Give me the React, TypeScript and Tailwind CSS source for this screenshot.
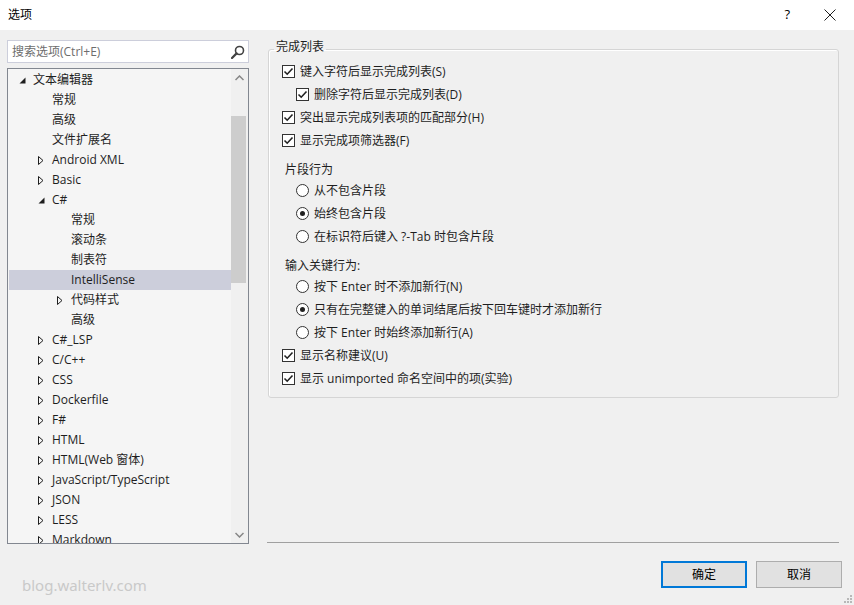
import React from "react";

type TreeNode = {
  label: string;
  level: 0 | 1 | 2;
  arrow?: "open" | "closed";
  selected?: boolean;
};

const treeNodes: TreeNode[] = [
  { label: "文本编辑器", level: 0, arrow: "open" },
  { label: "常规", level: 1 },
  { label: "高级", level: 1 },
  { label: "文件扩展名", level: 1 },
  { label: "Android XML", level: 1, arrow: "closed" },
  { label: "Basic", level: 1, arrow: "closed" },
  { label: "C#", level: 1, arrow: "open" },
  { label: "常规", level: 2 },
  { label: "滚动条", level: 2 },
  { label: "制表符", level: 2 },
  { label: "IntelliSense", level: 2, selected: true },
  { label: "代码样式", level: 2, arrow: "closed" },
  { label: "高级", level: 2 },
  { label: "C#_LSP", level: 1, arrow: "closed" },
  { label: "C/C++", level: 1, arrow: "closed" },
  { label: "CSS", level: 1, arrow: "closed" },
  { label: "Dockerfile", level: 1, arrow: "closed" },
  { label: "F#", level: 1, arrow: "closed" },
  { label: "HTML", level: 1, arrow: "closed" },
  { label: "HTML(Web 窗体)", level: 1, arrow: "closed" },
  { label: "JavaScript/TypeScript", level: 1, arrow: "closed" },
  { label: "JSON", level: 1, arrow: "closed" },
  { label: "LESS", level: 1, arrow: "closed" },
  { label: "Markdown", level: 1, arrow: "closed" },
];

const levelPad = ["pl-[10px]", "pl-[29px]", "pl-[48px]"];

const TreeArrow = ({ kind }: { kind?: "open" | "closed" }) => {
  if (kind === "open") {
    return (
      <svg width="7" height="7" viewBox="0 0 7 7">
        <path d="M6.5 0.5 L6.5 6.5 L0.5 6.5 Z" fill="#1e1e1e" />
      </svg>
    );
  }
  if (kind === "closed") {
    return (
      <svg width="6" height="9" viewBox="0 0 6 9">
        <path d="M0.5 0.5 L5 4.5 L0.5 8.5 Z" fill="none" stroke="#1e1e1e" strokeWidth="1" />
      </svg>
    );
  }
  return null;
};

const CheckBox = () => (
  <span className="flex h-[13px] w-[13px] items-center justify-center border border-[#333333] bg-white">
    <svg width="11" height="11" viewBox="0 0 11 11">
      <path d="M1.5 5.5 L4.2 8.2 L9.5 2.5" fill="none" stroke="#212121" strokeWidth="1.6" />
    </svg>
  </span>
);

const Radio = ({ checked }: { checked?: boolean }) => (
  <span className="flex h-[13px] w-[13px] items-center justify-center rounded-full border border-[#333333] bg-white">
    {checked && <span className="h-[5px] w-[5px] rounded-full bg-[#212121]" />}
  </span>
);

const CheckRow = ({ label, indent }: { label: string; indent?: boolean }) => (
  <div className={`flex h-[23px] items-center gap-[5px] ${indent ? "pl-[27px]" : "pl-[13px]"}`}>
    <CheckBox />
    <span>{label}</span>
  </div>
);

const RadioRow = ({ label, checked }: { label: string; checked?: boolean }) => (
  <div className="flex h-[23px] items-center gap-[5px] pl-[27px]">
    <Radio checked={checked} />
    <span>{label}</span>
  </div>
);

const App: React.FC = () => {
  return (
    <div className="relative flex h-[605px] w-[854px] flex-col overflow-hidden bg-[#f0f0f0] font-['Open_Sans','Noto_Sans_CJK_SC',sans-serif] text-[12px] text-[#1e1e1e]">
      {/* title bar */}
      <div className="flex h-[30px] items-center bg-white">
        <span className="pl-[8px] text-[12px] text-black">选项</span>
        <span className="ml-auto text-[13px] text-black">?</span>
        <span className="ml-[34px] mr-[18px] flex items-center">
          <svg width="12" height="12" viewBox="0 0 12 12">
            <path d="M0.5 0.5 L11.5 11.5 M11.5 0.5 L0.5 11.5" stroke="#1e1e1e" strokeWidth="1" />
          </svg>
        </span>
      </div>

      <div className="flex flex-1">
        {/* left column */}
        <div className="flex w-[249px] flex-col pl-[7px]">
          <div className="mt-[10px] flex h-[23px] items-center border border-[#cccedb] bg-white pl-[4px] pr-[3px]">
            <span className="text-[#6d6d6d]">搜索选项(Ctrl+E)</span>
            <svg className="ml-auto" width="14" height="14" viewBox="0 0 14 14">
              <circle cx="8.5" cy="5.5" r="4" fill="none" stroke="#424242" strokeWidth="1.6" />
              <path d="M5.6 8.4 L1 13" stroke="#424242" strokeWidth="2.2" strokeLinecap="round" />
            </svg>
          </div>

          <div className="mt-[5px] flex h-[476px] border border-[#828790] bg-[#f5f5f5]">
            <div className="flex-1 overflow-hidden pl-[1px] pt-[1px]">
              {treeNodes.map((node, i) => (
                <div
                  key={i}
                  className={`flex h-5 items-center ${levelPad[node.level]} ${node.selected ? "bg-[#cccedb]" : ""}`}
                >
                  <span className="flex w-[14px] items-center">
                    <TreeArrow kind={node.arrow} />
                  </span>
                  <span className="whitespace-nowrap leading-5">{node.label}</span>
                </div>
              ))}
            </div>
            <div className="flex w-[17px] flex-col bg-[#f0f0f0]">
              <div className="flex h-[17px] items-center justify-center">
                <svg width="9" height="6" viewBox="0 0 9 6">
                  <path d="M0.5 5 L4.5 1 L8.5 5" fill="none" stroke="#868686" strokeWidth="1.5" />
                </svg>
              </div>
              <div className="mt-[30px] h-[167px] w-[15px] bg-[#cdcdcd]" />
              <div className="mt-auto flex h-[17px] items-center justify-center">
                <svg width="9" height="6" viewBox="0 0 9 6">
                  <path d="M0.5 1 L4.5 5 L8.5 1" fill="none" stroke="#868686" strokeWidth="1.5" />
                </svg>
              </div>
            </div>
          </div>

          <div className="mt-[30px] pl-[15px] font-['Noto_Sans',sans-serif] text-[15px] leading-[22px] text-[#c9c9c9]">
            blog.walterlv.com
          </div>
        </div>

        {/* right column */}
        <div className="flex flex-1 flex-col">
          <fieldset className="ml-[19px] mr-[15px] mt-[9px] rounded-[3px] border border-[#d5d5d5] pb-[7px] shadow-[inset_1px_1px_0_#ffffff]">
            <legend className="ml-[5px] px-[2px] pb-[4px] leading-[16px]">完成列表</legend>
            <div className="pt-[1px]">
              <CheckRow label="键入字符后显示完成列表(S)" />
              <CheckRow label="删除字符后显示完成列表(D)" indent />
              <CheckRow label="突出显示完成列表项的匹配部分(H)" />
              <CheckRow label="显示完成项筛选器(F)" />

              <div className="mt-[8px] flex h-[19px] items-center pl-[16px]">片段行为</div>
              <RadioRow label="从不包含片段" />
              <RadioRow label="始终包含片段" checked />
              <RadioRow label="在标识符后键入 ?-Tab 时包含片段" />

              <div className="mt-[8px] flex h-[19px] items-center pl-[16px]">输入关键行为:</div>
              <RadioRow label="按下 Enter 时不添加新行(N)" />
              <RadioRow label="只有在完整键入的单词结尾后按下回车键时才添加新行" checked />
              <RadioRow label="按下 Enter 时始终添加新行(A)" />
              <CheckRow label="显示名称建议(U)" />
              <CheckRow label="显示 unimported 命名空间中的项(实验)" />
            </div>
          </fieldset>

          <div className="ml-[18px] mr-[15px] mt-auto h-px bg-[#a0a0a0]" />
          <div className="mb-[17px] mr-[12px] mt-[18px] flex justify-end gap-[9px]">
            <button className="h-[27px] w-[86px] border-2 border-[#0078d7] bg-[#e1e1e1] text-[12px] text-black">
              确定
            </button>
            <button className="h-[27px] w-[86px] border border-[#adadad] bg-[#e1e1e1] text-[12px] text-black">
              取消
            </button>
          </div>
        </div>
      </div>

      {/* resize grip */}
      <svg className="absolute bottom-[2px] right-[2px]" width="8" height="8" viewBox="0 0 8 8">
        <rect x="6" y="0" width="2" height="2" fill="#b8b8b8" />
        <rect x="3" y="3" width="2" height="2" fill="#b8b8b8" />
        <rect x="6" y="3" width="2" height="2" fill="#b8b8b8" />
        <rect x="0" y="6" width="2" height="2" fill="#b8b8b8" />
        <rect x="3" y="6" width="2" height="2" fill="#b8b8b8" />
        <rect x="6" y="6" width="2" height="2" fill="#b8b8b8" />
      </svg>
    </div>
  );
};

export default App;
